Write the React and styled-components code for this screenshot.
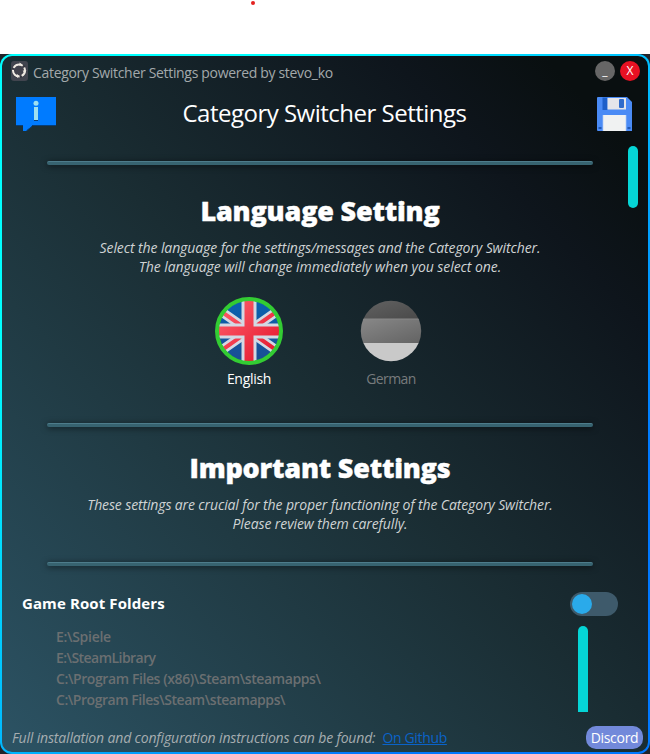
import React from "react";
import styled, { createGlobalStyle } from "styled-components";

const Global = createGlobalStyle`
  * { box-sizing: border-box; }
  html, body { margin: 0; background: #fff; }
  body { font-family: "Open Sans", "Noto Sans", sans-serif; overflow: hidden; }
`;

const Desktop = styled.main`
  width: 650px;
  height: 754px;
  display: flex;
  flex-direction: column;
`;

const Blank = styled.div`
  height: 54px;
  padding: 1px 0 0 251px;
`;

const RecordDot = styled.div`
  width: 4px;
  height: 4px;
  border-radius: 50%;
  background: #e3221f;
`;

const Backdrop = styled.div`
  height: 700px;
  background: #20242a;
`;

const Frame = styled.div`
  height: 700px;
  padding: 2px;
  border-radius: 12px;
  background: linear-gradient(135deg, #00ffff 0%, #00ffff 22%, #0078ff 78%, #0078ff 100%);
`;

const Window = styled.div`
  height: 696px;
  border-radius: 10px;
  display: flex;
  flex-direction: column;
  overflow: hidden;
  background: linear-gradient(to top right, #2c5364 0%, #203a43 33%, #1a2d33 50%, #0e151c 80%, #090f10 92%);
`;

const Label = styled.span`
  display: block;
  white-space: pre;
  font-size: ${(p) => p.$size}px;
  line-height: ${(p) => p.$line}px;
  letter-spacing: ${(p) => p.$track || 0}px;
  font-weight: ${(p) => p.$weight || 400};
  font-style: ${(p) => (p.$italic ? "italic" : "normal")};
  color: ${(p) => p.$color || "#fff"};
`;

const TitleBar = styled.header`
  height: 32px;
  display: flex;
  align-items: flex-start;
  padding: 5px 8px 0;
  gap: 5px;
`;

const WindowTitle = styled(Label)`
  margin-top: 2px;
`;

const Controls = styled.div`
  margin-left: auto;
  display: flex;
  gap: 5px;
`;

const RoundButton = styled.button`
  width: 20px;
  height: 20px;
  padding: 0;
  border: 0;
  border-radius: 50%;
  color: #fff;
  background: ${(p) => p.$fill};
  font: 12px/20px "Open Sans", sans-serif;
`;

const Header = styled.div`
  height: 50px;
  display: flex;
  justify-content: space-between;
  padding: 9px 16px 0 14px;
`;

const PageTitle = styled(Label)`
  margin: -1px 4px 0 0;
`;

const Content = styled.div`
  height: 576px;
  flex: none;
  display: flex;
  flex-direction: column;
  padding-top: 23px;
`;

const Scroller = styled.div`
  display: flex;
  justify-content: flex-end;
  height: 0;
  padding-right: 10px;
`;

const Thumb = styled.div`
  width: 10px;
  height: ${(p) => p.$height}px;
  margin-top: ${(p) => p.$top || 0}px;
  border-radius: ${(p) => (p.$clipped ? "5px 5px 0 0" : "5px")};
  background: #05d5d6;
  flex: none;
`;

const Rule = styled.div`
  width: 546px;
  height: 4px;
  margin-left: 45px;
  flex: none;
  border-radius: 2px;
  background: #376370;
  border-top: 1px solid #4d7c8b;
  box-shadow: 0 1px 6px rgba(0, 0, 0, 0.6);
`;

const Section = styled.section`
  height: ${(p) => p.$height}px;
  flex: none;
  display: flex;
  flex-direction: column;
  align-items: center;
  padding: ${(p) => p.$top}px 0 0;
  width: 636px;
`;

const Heading = styled(Label)`
  -webkit-text-stroke: 0.4px #fff;
`;

const Copy = styled.div`
  display: flex;
  flex-direction: column;
  align-items: center;
  margin-top: 9px;
`;

const Languages = styled.div`
  display: flex;
  gap: 74px;
  margin-top: 21px;
`;

const Language = styled.div`
  width: 68px;
  display: flex;
  flex-direction: column;
  align-items: center;
  gap: 4px;
`;

const FolderHead = styled.div`
  height: 24px;
  flex: none;
  display: flex;
  justify-content: space-between;
  align-items: flex-start;
  margin-top: 26px;
  padding: 0 30px 0 20px;
`;

const Toggle = styled.div`
  width: 48px;
  height: 24px;
  padding: 2px;
  border-radius: 12px;
  background: #3e5a6b;
`;

const Knob = styled.div`
  width: 20px;
  height: 20px;
  border-radius: 50%;
  background: #2aaaea;
`;

const FolderBody = styled.div`
  display: flex;
  justify-content: space-between;
  padding: 10px 60px 0 54px;
`;

const FolderList = styled.div`
  display: flex;
  flex-direction: column;
`;

const Footer = styled.footer`
  height: 38px;
  flex: none;
  display: flex;
  align-items: flex-start;
  padding: 14px 5px 0 10px;
`;

const Link = styled.a`
  margin-left: 7px;
  font-size: 14px;
  line-height: 19px;
  letter-spacing: -0.35px;
  color: #0a63c9;
  text-decoration: underline;
`;

const Discord = styled.button`
  width: 57px;
  height: 23px;
  margin: -2px 0 0 auto;
  padding: 0;
  border: 0;
  border-radius: 10px;
  background: #7289da;
  color: #fff;
  font: 14px/22px "Open Sans", sans-serif;
  letter-spacing: -0.3px;
`;

const AppIcon = () => (
  <svg width="18" height="20" viewBox="0 0 18 20">
    <rect x="1" width="17" height="20" rx="3" fill="#41454f" />
    <circle cx="9" cy="9.5" r="7.5" fill="#34363f" />
    <circle cx="9" cy="9.5" r="6" fill="#41424c" stroke="#eeeae2" strokeWidth="2" strokeDasharray="10.4 2.16" strokeDashoffset="4" />
    <path d="M9.5 1.5l3 2-3 1.5zM16.5 9.5l-2 3-1.8-3zM7 13l2.5 2L7 17z" fill="#eeeae2" />
  </svg>
);

const InfoIcon = () => (
  <svg width="40" height="35" viewBox="0 0 40 35">
    <path d="M0 0H40V29H16L10 34H7V29H0Z" fill="#007bff" />
    <path d="M0 28.5H7M16 28.5H40M16 29.5L11 33.5" stroke="#073e78" strokeWidth="1" />
    <circle cx="20" cy="6.3" r="2.5" fill="#9edff0" />
    <path d="M18 10H22V23H18Z" fill="#9edff0" />
    <path d="M18 23.5H22" stroke="#073e78" />
  </svg>
);

const SaveIcon = () => (
  <svg width="35" height="34" viewBox="0 0 35 34">
    <path d="M1 0H30L35 5V34H1Q0 34 0 33V1Q0 0 1 0Z" fill="#4a8bf5" />
    <path d="M5.5 0.5H10.5V13H5.5Z" fill="#1d5fc9" />
    <path d="M10.5 1H29V12.5H10.5Z" fill="#e4e5ea" />
    <rect x="22" y="2" width="5" height="9" rx="1" fill="#2f6bcb" />
    <path d="M6 18H29V34H6Z" fill="#f0f2f2" />
    <path d="M6 18V34M29 18V34" stroke="#afcbf7" strokeWidth=".7" />
    <path d="M1.5 30H4.5V32H1.5ZM30.5 30H33.5V32H30.5Z" fill="#2158b3" />
  </svg>
);

const BritishFlag = () => (
  <svg width="68" height="68" viewBox="0 0 68 68">
    <defs>
      <clipPath id="uk"><circle cx="34" cy="34" r="30.5" /></clipPath>
      <linearGradient id="red" x1="4" y1="4" x2="64" y2="64" gradientUnits="userSpaceOnUse">
        <stop offset=".2" stopColor="#fa5260" /><stop offset=".9" stopColor="#e51a30" />
      </linearGradient>
      <linearGradient id="blue" x1="0" y1="0" x2="0" y2="1">
        <stop stopColor="#0864b2" /><stop offset="1" stopColor="#1b4d91" />
      </linearGradient>
    </defs>
    <g clipPath="url(#uk)">
      <path fill="url(#blue)" d="M0 0H68V68H0Z" />
      <path d="M-6 6L74 62M-6 62L74 6" stroke="#d3d9e3" strokeWidth="9.5" />
      <path d="M-6 6L74 62M-6 62L74 6" stroke="url(#red)" strokeWidth="4" />
      <path d="M34 0V68M0 34H68" stroke="#d3d9e3" strokeWidth="15" />
      <path d="M29.5 0H38.5V29.5H68V38.5H38.5V68H29.5V38.5H0V29.5H29.5Z" fill="url(#red)" />
    </g>
    <circle cx="34" cy="34" r="32" fill="none" stroke="#33cc33" strokeWidth="4" />
  </svg>
);

const GermanFlag = () => (
  <svg width="68" height="68" viewBox="0 0 68 68">
    <defs>
      <clipPath id="de"><circle cx="34" cy="34" r="30.2" /></clipPath>
      <linearGradient id="dark" x1="0" y1="0" x2="1" y2="1"><stop stopColor="#666" /><stop offset="1" stopColor="#484848" /></linearGradient>
      <linearGradient id="mid" x1="0" y1="0" x2="1" y2="1"><stop stopColor="#898989" /><stop offset="1" stopColor="#626262" /></linearGradient>
    </defs>
    <g clipPath="url(#de)">
      <path fill="url(#dark)" d="M0 0H68V22H0Z" />
      <path fill="url(#mid)" d="M0 22H68V46H0Z" />
      <path fill="#c9c9c9" d="M0 46H68V68H0Z" />
      <path d="M0 22H68" stroke="#888" />
    </g>
  </svg>
);

const folders = [
  ["E:\\Spiele", -0.3],
  ["E:\\SteamLibrary", -0.55],
  ["C:\\Program Files (x86)\\Steam\\steamapps\\", -0.4],
  ["C:\\Program Files\\Steam\\steamapps\\", -0.45],
];

const Note = ({ children, track }) => (
  <Label $size={14} $line={19} $italic $track={track} $color="#cfd3d4">{children}</Label>
);

export default function App() {
  return (
    <Desktop>
      <Global />
      <Blank><RecordDot /></Blank>
      <Backdrop>
        <Frame>
          <Window>
            <TitleBar>
              <AppIcon />
              <WindowTitle $size={14} $line={20} $track={-0.32} $color="#a3a9ab">Category Switcher Settings powered by stevo_ko</WindowTitle>
              <Controls>
                <RoundButton $fill="#666">_</RoundButton>
                <RoundButton $fill="#e81123">X</RoundButton>
              </Controls>
            </TitleBar>
            <Header>
              <InfoIcon />
              <PageTitle $size={24} $line={33} $track={-0.5}>Category Switcher Settings</PageTitle>
              <SaveIcon />
            </Header>
            <Content>
              <Scroller><Thumb $height={62} $top={-15} /></Scroller>
              <Rule />
              <Section $height={258} $top={28}>
                <Heading $size={27} $line={36} $weight={800} $track={-0.2}>Language Setting</Heading>
                <Copy>
                  <Note track={-0.1}>Select the language for the settings/messages and the Category Switcher.</Note>
                  <Note track={-0.06}>The language will change immediately when you select one.</Note>
                </Copy>
                <Languages>
                  <Language><BritishFlag /><Label $size={14} $line={20} $track={-0.3}>English</Label></Language>
                  <Language><GermanFlag /><Label $size={14} $line={20} $track={-0.6} $color="#777b7d">German</Label></Language>
                </Languages>
              </Section>
              <Rule />
              <Section $height={135} $top={23}>
                <Heading $size={27} $line={36} $weight={800} $track={-0.2}>Important Settings</Heading>
                <Copy>
                  <Note track={-0.13}>These settings are crucial for the proper functioning of the Category Switcher.</Note>
                  <Note track={-0.1}>Please review them carefully.</Note>
                </Copy>
              </Section>
              <Rule />
              <FolderHead>
                <Label $size={15} $line={22} $weight={700} $track={0.1}>Game Root Folders</Label>
                <Toggle><Knob /></Toggle>
              </FolderHead>
              <FolderBody>
                <FolderList>
                  {folders.map(([name, track]) => (
                    <Label key={name} $size={14} $line={21} $weight={600} $track={track} $color="#6b6f71">{name}</Label>
                  ))}
                </FolderList>
                <Thumb $height={86} $clipped />
              </FolderBody>
            </Content>
            <Footer>
              <Label $size={14} $line={19} $italic $track={-0.16} $color="#a6adb0">Full installation and configuration instructions can be found:</Label>
              <Link>On Github</Link>
              <Discord>Discord</Discord>
            </Footer>
          </Window>
        </Frame>
      </Backdrop>
    </Desktop>
  );
}
